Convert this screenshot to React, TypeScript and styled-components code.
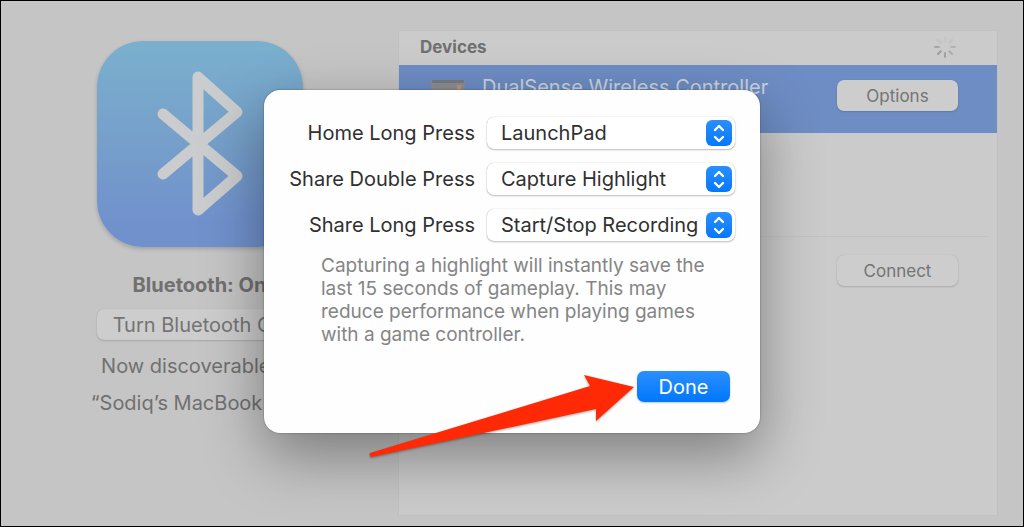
import React from 'react';
import styled, { createGlobalStyle } from 'styled-components';

const GlobalStyle = createGlobalStyle`
  *, *::before, *::after { box-sizing: border-box; }
  body { margin: 0; }
  button, select { font: inherit; letter-spacing: inherit; }
`;

const Window = styled.div`
  position: relative;
  display: flex;
  min-height: 100vh;
  padding: 29px 25px 10px 0;
  border: 1px solid #000;
  background: #c5c5c5;
  color: #707070;
  font-family: Inter, 'Liberation Sans', sans-serif;
  font-size: 20px;
  line-height: 24px;
  overflow: hidden;
`;

const Sidebar = styled.aside`
  display: flex;
  flex: 0 0 397px;
  flex-direction: column;
  align-items: center;
  padding-top: 11px;
`;

const BluetoothTile = styled.svg`
  width: 206px;
  height: 206px;
  border-radius: 46px;
  background: linear-gradient(#7ab0ce, #769fca 50%, #7191cd 88%);
  box-shadow: 0 2px 4px rgba(0, 0, 0, 0.18);
`;

const Status = styled.h1`
  margin: 26px 0 12px;
  font-size: 20px;
  font-weight: 700;
  line-height: 24px;
`;

const Note = styled.p`
  margin: 0 0 13px;
  white-space: nowrap;
`;

const GrayButton = styled.button<{ $wide?: boolean }>`
  width: ${(p) => (p.$wide ? 206 : 121)}px;
  height: 31px;
  padding: 0;
  border: 0;
  border-radius: 7px;
  background: #cdcdcd;
  box-shadow: 0 0 1px rgba(0, 0, 0, 0.15), 0 1px 2px rgba(0, 0, 0, 0.14);
  color: #747474;
  font-size: ${(p) => (p.$wide ? 20 : 17)}px;
  line-height: 24px;
  white-space: nowrap;
  ${(p) => p.$wide && 'margin-bottom: 14px;'}
`;

const DevicePanel = styled.section`
  flex: 1;
  display: flex;
  flex-direction: column;
  border: 1px solid #c1c1c1;
  background: #cbcbcb;
`;

const PanelHeader = styled.header`
  display: flex;
  align-items: center;
  justify-content: space-between;
  height: 34px;
  padding: 0 39px 2px 21px;
`;

const PanelTitle = styled.h2`
  margin: 0;
  font-size: 17px;
  font-weight: 700;
  line-height: 24px;
`;

const DeviceList = styled.ul`
  margin: 0;
  padding: 0;
  list-style: none;
`;

const DeviceRow = styled.li<{ $selected?: boolean }>`
  display: flex;
  align-items: ${(p) => (p.$selected ? 'flex-start' : 'flex-end')};
  justify-content: space-between;
  height: 68px;
  padding: ${(p) => (p.$selected ? '15px 39px 0 31px' : '0 39px 19px 31px')};
  background: ${(p) => (p.$selected ? '#6e8dc4' : 'transparent')};
`;

const Spacer = styled.li`
  height: 104px;
  margin: 0 9px 0 83px;
  border-bottom: 1px solid #c3c3c3;
`;

const Device = styled.div`
  display: flex;
  gap: 16px;
  color: #cdd2dc;
  line-height: 14px;
`;

const Backdrop = styled.div`
  position: absolute;
  inset: 0;
  display: flex;
  align-items: flex-start;
  justify-content: center;
  padding-top: 89px;
`;

const Dialog = styled.form`
  width: 496px;
  padding: 27px 25px 31px;
  border-radius: 16px;
  background: #fefefe;
  box-shadow: 0 0 2px rgba(0, 0, 0, 0.4), 0 22px 60px rgba(0, 0, 0, 0.38);
  color: #303030;
`;

const Fields = styled.div`
  display: grid;
  gap: 14px;
`;

const Field = styled.div`
  display: grid;
  grid-template-columns: 1fr 248px;
  column-gap: 12px;
  align-items: center;
`;

const FieldLabel = styled.label`
  text-align: right;
`;

const PopUp = styled.div`
  display: grid;
  grid-template-columns: 1fr 29px;
  align-items: center;
`;

const Select = styled.select`
  grid-area: 1 / 1 / 2 / 3;
  appearance: none;
  width: 100%;
  height: 32px;
  padding: 0 36px 0 14px;
  border: 0;
  border-radius: 7px;
  background: #fff;
  box-shadow: 0 0 1px rgba(0, 0, 0, 0.3), 0 1px 2px rgba(0, 0, 0, 0.24);
  color: #303030;
`;

const Stepper = styled.svg`
  grid-area: 1 / 2 / 2 / 3;
  width: 26px;
  height: 26px;
  border-radius: 6px;
  background: linear-gradient(#2a8fff, #0578fb);
  pointer-events: none;
`;

const Hint = styled.p`
  width: 390px;
  margin: 13px 0 25px 32px;
  color: #858585;
  font-size: 19px;
  line-height: 23px;
`;

const Actions = styled.div`
  position: relative;
  display: flex;
  justify-content: flex-end;
  padding-right: 5px;
`;

const DoneButton = styled.button`
  width: 93px;
  height: 31px;
  padding: 0;
  border: 0;
  border-radius: 7px;
  background: linear-gradient(#2b8fff, #0077fb);
  box-shadow: 0 1px 2px rgba(0, 90, 220, 0.3);
  color: #fff;
`;

const Arrow = styled.svg`
  position: absolute;
  top: 0;
  right: 98px;
  width: 268px;
  height: 92px;
  overflow: visible;
  pointer-events: none;
  filter: drop-shadow(0 1px 1px rgba(0, 0, 0, 0.35));
`;

const SPOKES = [0.06, 0.1, 0.25, 0.35, 0.45, 0.5, 0.4, 0.1];

const Spinner = () => (
  <svg width="26" height="26" viewBox="0 0 26 26" aria-label="Searching" role="img">
    {SPOKES.map((opacity, i) => (
      <path
        key={i}
        d="M13 7V3"
        stroke="#707070"
        strokeWidth="2"
        strokeLinecap="round"
        opacity={opacity}
        transform={`rotate(${i * 45} 13 13)`}
      />
    ))}
  </svg>
);

const ControllerIcon = () => (
  <svg width="36" height="36" viewBox="0 0 36 36" aria-hidden="true">
    <rect x="1" y="0" width="34" height="36" rx="3" fill="#8c8e93" />
    <rect x="2" y="0" width="32" height="3" rx="1" fill="#777a80" />
    <rect x="27" y="5" width="4" height="5" fill="#c09478" />
  </svg>
);

const FIELDS = [
  { id: 'home', label: 'Home Long Press', value: 'LaunchPad' },
  { id: 'share-double', label: 'Share Double Press', value: 'Capture Highlight' },
  { id: 'share-long', label: 'Share Long Press', value: 'Start/Stop Recording' },
];

export default function App() {
  return (
    <>
      <GlobalStyle />
      <Window>
        <Sidebar>
          <BluetoothTile viewBox="0 0 206 206" role="img" aria-label="Bluetooth">
            <path
              d="M66 73L140 135L101 169V36L140 71L66 133"
              fill="none"
              stroke="#cbcccd"
              strokeWidth="11"
              strokeLinecap="round"
              strokeLinejoin="round"
            />
          </BluetoothTile>
          <Status>Bluetooth: On</Status>
          <GrayButton $wide type="button">Turn Bluetooth Off</GrayButton>
          <Note>Now discoverable as</Note>
          <Note>“Sodiq’s MacBook Pro”</Note>
        </Sidebar>

        <DevicePanel>
          <PanelHeader>
            <PanelTitle>Devices</PanelTitle>
            <Spinner />
          </PanelHeader>
          <DeviceList>
            <DeviceRow $selected>
              <Device>
                <ControllerIcon />
                <span>DualSense Wireless Controller</span>
              </Device>
              <GrayButton type="button">Options</GrayButton>
            </DeviceRow>
            <Spacer />
            <DeviceRow>
              <span />
              <GrayButton type="button">Connect</GrayButton>
            </DeviceRow>
          </DeviceList>
        </DevicePanel>

        <Backdrop>
          <Dialog role="dialog" aria-modal="true" onSubmit={(e) => e.preventDefault()}>
            <Fields>
              {FIELDS.map((field) => (
                <Field key={field.id}>
                  <FieldLabel htmlFor={field.id}>{field.label}</FieldLabel>
                  <PopUp>
                    <Select id={field.id} defaultValue={field.value}>
                      <option>{field.value}</option>
                    </Select>
                    <Stepper viewBox="0 0 26 26" aria-hidden="true">
                      <path
                        d="M9 10L13 6L17 10M9 17L13 21L17 17"
                        fill="none"
                        stroke="#fff"
                        strokeWidth="2.300"
                        strokeLinecap="round"
                        strokeLinejoin="round"
                      />
                    </Stepper>
                  </PopUp>
                </Field>
              ))}
            </Fields>
            <Hint>
              Capturing a highlight will instantly save the last 15 seconds of gameplay. This may
              reduce performance when playing games with a game controller.
            </Hint>
            <Actions>
              <DoneButton type="submit">Done</DoneButton>
              <Arrow viewBox="0 0 268 92" aria-hidden="true">
                <path
                  d="M1 82L221 15L215 4L265 16L227 50V38L2 86Q0 84 1 82Z"
                  fill="#ff2a05"
                />
              </Arrow>
            </Actions>
          </Dialog>
        </Backdrop>
      </Window>
    </>
  );
}
